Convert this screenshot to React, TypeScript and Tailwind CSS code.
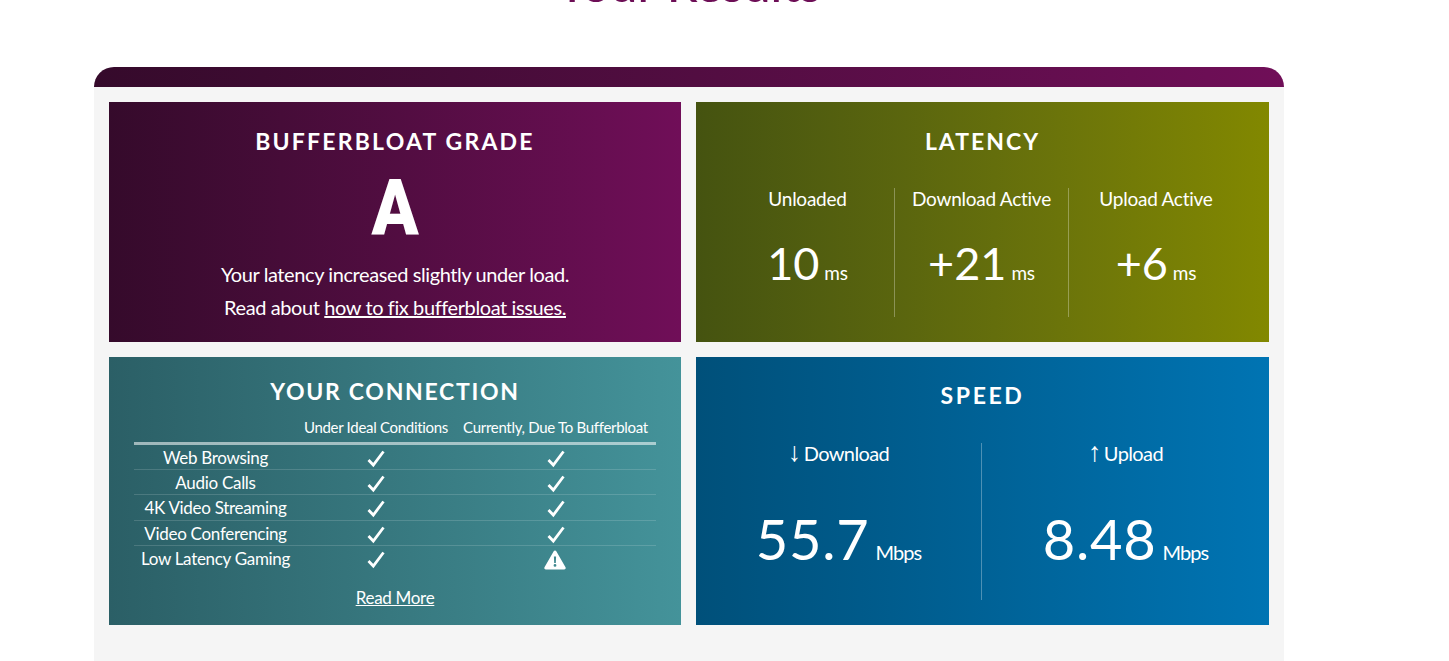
import React from "react";

const font = "font-['Lato','Noto_Sans',sans-serif]";

function Check() {
  return (
    <svg width="18" height="18" viewBox="0 0 18 18" className="block">
      <path d="M1.5 10 L6.3 15 L16.5 1.5" fill="none" stroke="white" strokeWidth="2.8" strokeLinejoin="miter" />
    </svg>
  );
}

function Warn() {
  return (
    <svg width="22" height="20" viewBox="0 0 22 20" className="block">
      <path fillRule="evenodd" d="M11 0.5 C11.6 0.5 12 0.8 12.3 1.3 L21.5 17.2 C22.1 18.3 21.4 19.5 20.2 19.5 L1.8 19.5 C0.6 19.5 -0.1 18.3 0.5 17.2 L9.7 1.3 C10 0.8 10.4 0.5 11 0.5 Z M9.9 6.5 L10.2 13 L11.8 13 L12.1 6.5 Z M11 14 A1.4 1.4 0 1 0 11 16.8 A1.4 1.4 0 1 0 11 14 Z" fill="white" />
    </svg>
  );
}

const rows: [string, boolean, string][] = [
  ["Web Browsing", true, "h-[25px]"],
  ["Audio Calls", true, "h-[25px]"],
  ["4K Video Streaming", true, "h-[26px]"],
  ["Video Conferencing", true, "h-[25px]"],
  ["Low Latency Gaming", false, "h-[26px]"],
];

function Title({ children, className }: { children: React.ReactNode; className?: string }) {
  return (
    <h2 className={`text-center text-[23px] leading-[30px] font-bold text-white ${className ?? ""}`}>
      {children}
    </h2>
  );
}

function LatencyCol({ label, value, border }: { label: string; value: string; border?: boolean }) {
  return (
    <div className={`flex flex-col items-center h-[129px] ${border ? "border-l border-white/30" : ""}`}>
      <div className="mt-[-2px] text-[19px] leading-[26px] tracking-[-0.25px]">{label}</div>
      <div className="mt-[23px] flex items-baseline leading-[56px]">
        <span className="text-[45px] tracking-[0px]">{value}</span>
        <span className="ml-[5px] text-[19px] tracking-[-0.2px]">ms</span>
      </div>
    </div>
  );
}

function SpeedCol({ arrow, label, value, border }: { arrow: string; label: string; value: string; border?: boolean }) {
  return (
    <div className={`flex flex-col items-center h-[157px] ${border ? "border-l border-white/30" : ""}`}>
      <div className="mt-[-3px] flex items-baseline text-[20px] leading-[24px] tracking-[-0.6px]">
        <span className="font-['Liberation_Sans'] text-[27px] leading-[24px] mr-[3px]">{arrow}</span>
        {label}
      </div>
      <div className="mt-[39px] flex items-baseline leading-[70px]">
        <span className="text-[56px] tracking-[0.8px]">{value}</span>
        <span className="ml-[6px] text-[20px] tracking-[-0.9px]">Mbps</span>
      </div>
    </div>
  );
}

export default function App() {
  return (
    <div className={`h-[661px] w-[1449px] overflow-hidden bg-white ${font}`}>
      <div className="ml-[94px] w-[1190px]">
        <h1 className="mt-[-47px] h-[114px] text-center text-[49px] leading-[60px] font-medium text-[#6d0e56]">Your Results</h1>
        <div className="h-[20px] rounded-t-[20px] bg-gradient-to-r from-[#350a2b] to-[#700e58]" />
        <div className="h-[600px] bg-[#f5f5f5] p-[15px]">
          <div className="grid grid-cols-[572px_573px] grid-rows-[240px_268px] gap-[15px] text-white">
            <section className="bg-gradient-to-r from-[#350a2b] to-[#700e58] pt-[24px] text-center">
              <Title className="tracking-[2.2px]">BUFFERBLOAT GRADE</Title>
              <div className="mt-[13px] h-[78px] font-['Roboto',sans-serif] text-[77px] leading-[78px] font-black">
                <span className="inline-block scale-x-90">A</span>
              </div>
              <p className="mt-[11px] text-[20px] leading-[33px] tracking-[-0.4px]">Your latency increased slightly under load.</p>
              <p className="text-[20px] leading-[33px] tracking-[-0.4px]">
                Read about <a className="underline">how to fix bufferbloat issues.</a>
              </p>
            </section>

            <section className="bg-gradient-to-r from-[#455310] to-[#828800] pt-[24px]">
              <Title className="tracking-[2px]">LATENCY</Title>
              <div className="mt-[32px] ml-[25px] mr-[26px] grid grid-cols-[173px_174px_175px]">
                <LatencyCol label="Unloaded" value="10" />
                <LatencyCol label="Download Active" value="+21" border />
                <LatencyCol label="Upload Active" value="+6" border />
              </div>
            </section>

            <section className="bg-gradient-to-r from-[#2b5f66] to-[#44939a] pt-[19px] px-[25px]">
              <Title className="tracking-[1.7px]">YOUR CONNECTION</Title>
              <div className="mt-[7px] grid grid-cols-[163px_158px_201px] h-[29px] items-center text-center text-[15px] tracking-[-0.3px] border-b-[3px] border-white/55 box-content">
                <div />
                <div>Under Ideal Conditions</div>
                <div>Currently, Due To Bufferbloat</div>
              </div>
              {rows.map(([name, ok, h], i) => (
                <div
                  key={name}
                  className={`grid grid-cols-[163px_158px_201px] items-center text-center text-[17px] tracking-[-0.3px] ${h} ${i < 4 ? "border-b border-white/15" : ""}`}
                >
                  <div>{name}</div>
                  <div className="flex justify-center pt-[2px]"><Check /></div>
                  <div className="flex justify-center pt-[2px]">{ok ? <Check /> : <span className="ml-[-2px]"><Warn /></span>}</div>
                </div>
              ))}
              <div className="mt-[14px] text-center text-[17px] leading-[24px] tracking-[-0.3px]">
                <a className="underline">Read More</a>
              </div>
            </section>

            <section className="bg-gradient-to-r from-[#00507a] to-[#0074b3] pt-[23px]">
              <Title className="tracking-[2.6px]">SPEED</Title>
              <div className="mt-[33px] grid grid-cols-[285px_288px]">
                <SpeedCol arrow="↓" label="Download" value="55.7" />
                <SpeedCol arrow="↑" label="Upload" value="8.48" border />
              </div>
            </section>
          </div>
        </div>
      </div>
    </div>
  );
}
